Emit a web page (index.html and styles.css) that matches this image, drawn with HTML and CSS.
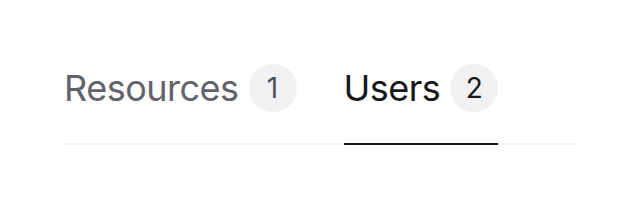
FILE: index.html
```html
<!DOCTYPE html>
<html>
<head>
<meta charset="utf-8">
<link rel="stylesheet" href="styles.css">
</head>
<body>
<div class="wrap">
  <nav class="tabs">
    <a class="tab"><span class="label">Resources</span><span class="badge">1</span></a>
    <a class="tab active"><span class="label">Users</span><span class="badge">2</span></a>
  </nav>
</div>
</body>
</html>
```
FILE: styles.css
```css
html, body {
  margin: 0;
  padding: 0;
  background: #ffffff;
}
.wrap {
  padding: 32px 64px 0;
  font-family: Inter, "Liberation Sans", sans-serif;
}
.tabs {
  display: flex;
  gap: 47px;
  border-bottom: 2px solid #f1f1f3;
}
.tab {
  display: flex;
  align-items: center;
  gap: 10px;
  padding: 32px 0 31px;
  margin-bottom: -2px;
  border-bottom: 2px solid transparent;
  font-size: 36px;
  line-height: 48px;
  color: #62626c;
  text-decoration: none;
}
.label {
  letter-spacing: -0.5px;
}
.tab.active {
  color: #18181b;
  border-bottom-color: #18181b;
}
.badge {
  display: flex;
  align-items: center;
  justify-content: center;
  width: 48px;
  height: 48px;
  border-radius: 50%;
  background: #f1f1f3;
  font-size: 28px;
  line-height: 1;
  color: #4f4f58;
}
.tab.active .badge {
  color: #18181b;
}
```
